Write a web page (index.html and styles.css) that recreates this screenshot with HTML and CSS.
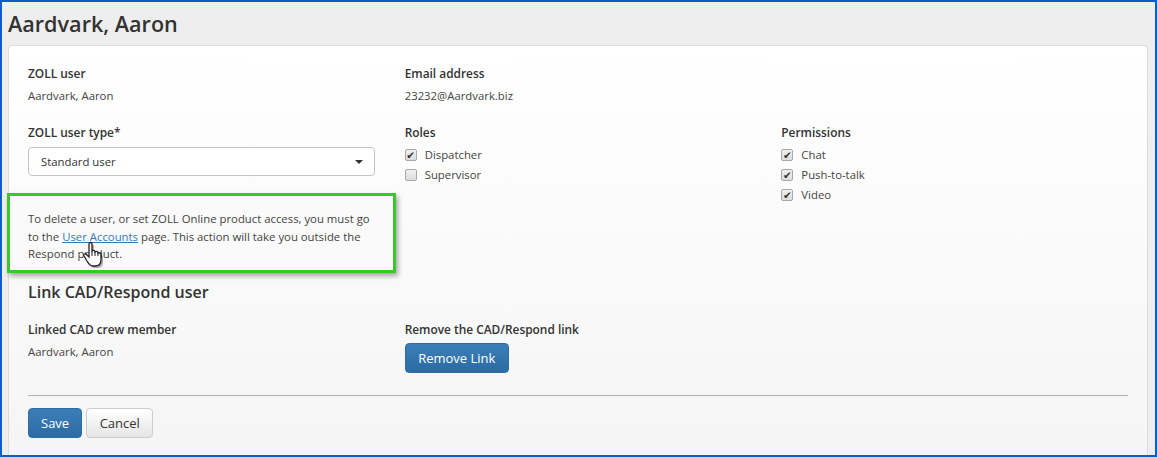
FILE: index.html
```html
<!DOCTYPE html>
<html lang="en">
<head>
<meta charset="utf-8">
<title>Aardvark, Aaron</title>
<link rel="stylesheet" href="styles.css">
</head>
<body>
<div class="frame">
  <h1 class="title">Aardvark, Aaron</h1>
  <main class="panel">
    <div class="grid row-one">
      <div><div class="label">ZOLL user</div><div class="value">Aardvark, Aaron</div></div>
      <div><div class="label">Email address</div><div class="value">23232@Aardvark.biz</div></div>
    </div>
    <div class="grid row-two">
      <div>
        <div class="label">ZOLL user type*</div>
        <div class="select"><span>Standard user</span><i class="caret"></i></div>
        <div class="note">
          To delete a user, or set ZOLL Online product access, you must go to the <a class="link" href="#">User Accounts</a> page. This action will take you outside the Respond product.
          <svg class="cursor" width="26" height="30" viewBox="0 0 26 30">
            <path class="cursor-shadow" d="M9 5c0-2 3-2 3 0v7c1-1 3-1 3 1 1-1 3-1 3 1 1-1 3 0 3 2v5c0 4-2 6-6 6h-2c-3 0-4-2-6-5l-3-5c-1-2 1-3 3-1l2 2z"/>
            <path class="cursor-hand" d="M7 3c0-2 3-2 3 0v7c1-1 3-1 3 1 1-1 3-1 3 1 1-1 3 0 3 2v5c0 4-2 6-6 6h-2c-3 0-4-2-6-5l-3-5c-1-2 1-3 3-1l2 2z"/>
            <path class="cursor-line" d="M10 10v5M13 11v4M16 12v3"/>
          </svg>
        </div>
      </div>
      <div>
        <div class="label">Roles</div>
        <div class="check"><span class="box on">✔</span>Dispatcher</div>
        <div class="check"><span class="box"></span>Supervisor</div>
      </div>
      <div>
        <div class="label">Permissions</div>
        <div class="check"><span class="box on">✔</span>Chat</div>
        <div class="check"><span class="box on">✔</span>Push-to-talk</div>
        <div class="check"><span class="box on">✔</span>Video</div>
      </div>
    </div>
    <h2 class="subtitle">Link CAD/Respond user</h2>
    <div class="grid row-three">
      <div><div class="label">Linked CAD crew member</div><div class="value">Aardvark, Aaron</div></div>
      <div><div class="label">Remove the CAD/Respond link</div><button class="btn primary remove">Remove Link</button></div>
    </div>
    <hr class="rule">
    <div class="actions">
      <button class="btn primary save">Save</button>
      <button class="btn plain">Cancel</button>
    </div>
  </main>
</div>
</body>
</html>
```
FILE: styles.css
```css
* { box-sizing: border-box; }
html, body { margin: 0; height: 100%; }
body { font-family: "Open Sans", "Noto Sans", sans-serif; font-size: 11.35px; color: #333; }
.frame {
  width: 1157px; height: 457px; overflow: hidden;
  border: 2px solid #0b5ec9; background: #eeeeee;
  padding: 0 7px 0 6px; display: flex; flex-direction: column;
}
.title { margin: 10px 0 0; height: 33px; font-size: 21.6px; line-height: 24px; font-weight: 600; color: #333; }
.panel {
  flex: 1; border: 1px solid #dcdcdc; border-bottom: 0; border-radius: 4px 4px 0 0;
  background: linear-gradient(#ffffff, #f5f5f5);
  padding: 20px 19px 0;
}
.grid { display: grid; grid-template-columns: repeat(3, 346.67px); column-gap: 30px; }
.label { font-size: 11.9px; font-weight: 600; line-height: 14px; color: #333; }
.value { margin-top: 8px; line-height: 16px; color: #444; }
.row-two { margin-top: 21px; }
.select {
  margin-top: 8px; height: 29px; border: 1px solid #c4c4c4; border-radius: 4px;
  background: #fff; padding: 0 12px; display: flex; align-items: center; justify-content: space-between;
}
.caret { border: 4px solid transparent; border-top: 4px solid #333; border-bottom: 0; margin-right: -1px; }
.note {
  position: relative; margin: 17px -21px 0 -21px; height: 80px; width: 389px;
  border: 3px solid #39c82a; padding: 14px 18px 0; line-height: 17.5px; color: #444;
  box-shadow: 2px 3px 5px rgba(0,0,0,.35);
  background: #fafafa;
}
.link { color: #337ab7; text-decoration: underline; }
.cursor { position: absolute; left: 72px; top: 45px; }
.cursor-shadow { fill: rgba(0,0,0,.3); }
.cursor-hand { fill: #fff; stroke: #222; stroke-width: 1.3; }
.cursor-line { fill: none; stroke: #222; stroke-width: 1; }
.check { display: flex; align-items: center; height: 20px; color: #444; line-height: 20px; }
.label + .check { margin-top: 6px; }
.box {
  width: 12px; height: 12px; margin-right: 8px; border: 1px solid #a8a8a8; border-radius: 2px;
  background: linear-gradient(#f0f0f0, #dcdcdc);
  font-size: 10.5px; line-height: 10px; text-align: center; color: #333; font-family: "DejaVu Sans", sans-serif;
}
.subtitle { margin: 8px 0 0; font-size: 16px; line-height: 22px; font-weight: 600; color: #333; }
.row-three { margin-top: 19px; }
.btn {
  font-family: inherit; font-size: 13px; height: 30px; border-radius: 4px; padding: 0 12.5px; line-height: 28px;
}
.save { padding: 0 12px; }
.primary {
  color: #fff; border: 1px solid #2e6da4;
  background: linear-gradient(#3b7fb9, #2c6ba3);
}
.plain { color: #333; border: 1px solid #ccc; background: linear-gradient(#fff, #e6e6e6); }
.remove { display: block; margin-top: 7px; }
.rule { margin: 22px 0 12px; border: 0; border-top: 1px solid #aeb4bb; }
.actions { display: flex; gap: 4px; }
```
